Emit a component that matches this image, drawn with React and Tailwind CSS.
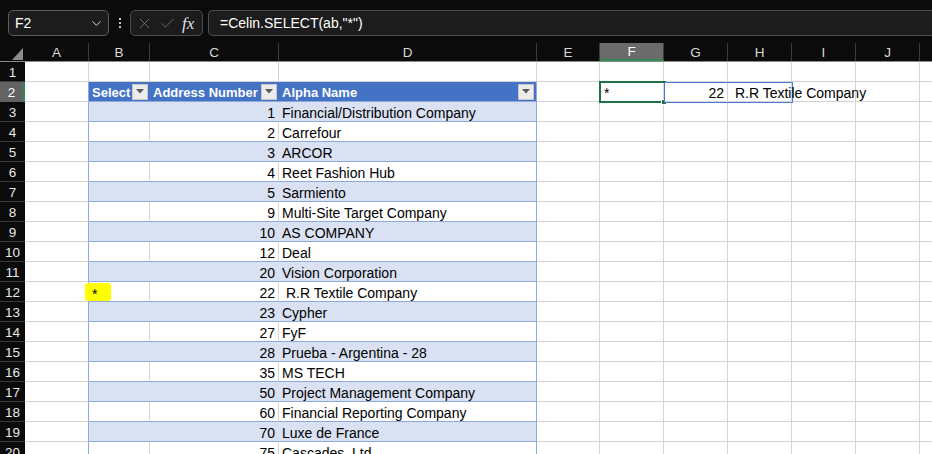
import { ChevronDown, X, Check } from "lucide-react";

/* ---------- sheet data ---------- */
const COLS = [
  { key: "A", w: "w-[64px]" },
  { key: "B", w: "w-[61px]" },
  { key: "C", w: "w-[129px]" },
  { key: "D", w: "w-[258px]" },
  { key: "E", w: "w-[63px]" },
  { key: "F", w: "w-[64px]" },
  { key: "G", w: "w-[64px]" },
  { key: "H", w: "w-[64px]" },
  { key: "I", w: "w-[64px]" },
  { key: "J", w: "w-[64px]" },
  { key: "", w: "w-[64px]" },
];

const ROWS = [
  [1, "Financial/Distribution Company"],
  [2, "Carrefour"],
  [3, "ARCOR"],
  [4, "Reet Fashion Hub"],
  [5, "Sarmiento"],
  [9, "Multi-Site Target Company"],
  [10, "AS COMPANY"],
  [12, "Deal"],
  [20, "Vision Corporation"],
  [22, " R.R Textile Company"],
  [23, "Cypher"],
  [27, "FyF"],
  [28, "Prueba - Argentina - 28"],
  [35, "MS TECH"],
  [50, "Project Management Company"],
  [60, "Financial Reporting Company"],
  [70, "Luxe de France"],
  [75, "Cascades, Ltd"],
];

const cellBase = "shrink-0 h-full border-r border-b border-[#d4d4d4] bg-white";

/* ---------- UI helpers ---------- */
function RowHead({ n, selected }) {
  return (
    <div
      className={`w-[25px] shrink-0 h-full flex items-center justify-center pt-[3px] text-[13.5px] ${
        selected
          ? "bg-[#636363] text-white border-r-2 border-[#2e8b57]"
          : "bg-[#0b0b0b] text-[#e8e8e8] border-b border-[#3a3a3a]"
      }`}
    >
      {n}
    </div>
  );
}

function FilterBtn() {
  return (
    <div className="ml-auto mr-[2px] w-[16px] h-[16px] shrink-0 bg-[#ececec] border border-[#c8c8c8] flex items-center justify-center">
      <svg width="8" height="5" viewBox="0 0 8 5">
        <path d="M0 0 L8 0 L4 4.5 Z" fill="#5a5a5a" />
      </svg>
    </div>
  );
}

function FormulaBar() {
  return (
    <div className="h-[43px] bg-[#0b0b0b] flex items-start pt-[10px] pl-[8px]">
      <div className="w-[101px] h-[26px] rounded-[5px] border border-[#5c5c5c] bg-[#1c1c1c] flex items-center pl-[6px] pr-[4px] text-[14px] text-white">
        <span>F2</span>
        <ChevronDown className="ml-auto" size={15} strokeWidth={1.6} color="#d0d0d0" />
      </div>
      <div className="w-[21px] h-[26px] flex flex-col items-center justify-center gap-[2px]">
        <span className="w-[2px] h-[2px] bg-[#c8c8c8]" />
        <span className="w-[2px] h-[2px] bg-[#c8c8c8]" />
        <span className="w-[2px] h-[2px] bg-[#c8c8c8]" />
      </div>
      <div className="w-[73px] h-[26px] rounded-[5px] border border-[#4c4c4c] bg-[#1c1c1c] flex items-center pl-[5px]">
        <X size={17} strokeWidth={1.3} color="#707070" />
        <Check className="ml-[6px]" size={17} strokeWidth={1.3} color="#707070" />
        <span className="ml-[6px] font-['Liberation_Serif',serif] italic text-[17px] text-[#e0e0e0] leading-none">
          fx
        </span>
      </div>
      <div className="ml-[5px] flex-1 h-[26px] rounded-l-[5px] border border-r-0 border-[#4c4c4c] bg-[#1c1c1c] flex items-center pl-[11px] text-[14px] text-white whitespace-pre">
        =Celin.SELECT(ab,"*")
      </div>
    </div>
  );
}

function ColumnHeader() {
  return (
    <div className="h-[19px] flex bg-[#0b0b0b] border-b border-[#8a8a8a]">
      <div className="w-[25px] shrink-0 h-full relative">
        <svg className="absolute right-[2px] bottom-[1px]" width="11" height="12" viewBox="0 0 11 12">
          <path d="M11 0 L11 12 L0 12 Z" fill="#8c8c8c" />
        </svg>
      </div>
      {COLS.map((c) => (
        <div
          key={c.key + c.w}
          className={`${c.w} shrink-0 h-full flex items-center justify-center pt-[2px] text-[13.5px] border-r border-[#3c3c3c] ${
            c.key === "F" ? "bg-[#6b6b6b] text-white border-b-2 border-b-[#2e8b57]" : "text-[#d8d8d8]"
          }`}
        >
          {c.key}
        </div>
      ))}
    </div>
  );
}

function TableRow({ rowNum, num, name }) {
  const band = rowNum % 2 === 1;
  const bg = band ? "bg-[#d9e1f2]" : "bg-white";
  const inner = band ? "border-r-[#d9e1f2]" : "border-r-[#d4d4d4]";
  const hl = rowNum === 12;
  return (
    <div className="flex h-[20px]">
      <RowHead n={rowNum} />
      <div className={`${cellBase} w-[64px] border-r-[#8ea9db]`} />
      <div className={`shrink-0 h-full w-[61px] border-r border-b border-b-[#8ea9db] ${inner} ${bg} relative`}>
        {hl && (
          <>
            <div className="absolute left-[-4px] top-[1px] w-[26px] h-[18px] bg-[#ffff00] rounded-[3px]" />
            <span className="absolute left-[3px] top-[2px] text-[14px]">*</span>
          </>
        )}
      </div>
      <div className={`shrink-0 h-full w-[129px] border-r border-b border-b-[#8ea9db] ${inner} ${bg} flex items-center justify-end pr-[3px] pt-[3px] text-[14px]`}>
        {num}
      </div>
      <div className={`shrink-0 h-full w-[258px] border-r border-b border-[#8ea9db] ${bg} flex items-center pl-[3px] pt-[3px] text-[14px] whitespace-pre`}>
        {name}
      </div>
      {COLS.slice(4).map((c) => (
        <div key={c.key + c.w} className={`${cellBase} ${c.w}`} />
      ))}
    </div>
  );
}

export default function App() {
  return (
    <div className="w-[932px] h-[454px] overflow-hidden bg-white font-['Liberation_Sans',Arial,sans-serif] text-black">
      <FormulaBar />
      <ColumnHeader />

      {/* row 1 */}
      <div className="flex h-[20px]">
        <RowHead n={1} />
        {COLS.map((c) => (
          <div key={c.key + c.w} className={`${cellBase} ${c.w}`} />
        ))}
      </div>

      {/* row 2: table header + formula result */}
      <div className="flex h-[20px]">
        <RowHead n={2} selected />
        <div className={`${cellBase} w-[64px] border-r-[#8ea9db]`} />
        <div className="shrink-0 h-full w-[61px] bg-[#4472c4] border-b border-[#8ea9db] flex items-center pl-[3px] text-[13px] font-bold text-white">
          <span className="pt-[3px] whitespace-nowrap">Select</span>
          <FilterBtn />
        </div>
        <div className="shrink-0 h-full w-[129px] bg-[#4472c4] border-b border-[#8ea9db] flex items-center pl-[3px] text-[13px] font-bold text-white">
          <span className="pt-[3px] whitespace-nowrap">Address Number</span>
          <FilterBtn />
        </div>
        <div className="shrink-0 h-full w-[258px] bg-[#4472c4] border-r border-b border-[#8ea9db] flex items-center pl-[3px] text-[13px] font-bold text-white">
          <span className="pt-[3px] whitespace-nowrap">Alpha Name</span>
          <FilterBtn />
        </div>
        <div className={`${cellBase} w-[63px]`} />
        <div className={`${cellBase} w-[64px] relative flex items-center pl-[4px] pt-[3px] text-[14px]`}>
          *
          <div className="absolute left-[-1px] top-[-1px] w-[67px] h-[22px] border-2 border-[#1e7145]" />
          <div className="absolute left-[61px] top-[17px] w-[6px] h-[6px] bg-[#1e7145] border border-white" />
        </div>
        <div className={`${cellBase} w-[64px] relative flex items-center justify-end pr-[3px] pt-[3px] text-[14px]`}>
          22
          <div className="absolute left-0 top-0 w-[129px] h-[21px] border border-[#4a7bd6]" />
        </div>
        <div className={`${cellBase} w-[64px] flex items-center pl-[3px] pt-[3px] text-[14px] overflow-visible`}>
          <span className="relative z-10 whitespace-pre"> R.R Textile Company</span>
        </div>
        <div className="shrink-0 h-full w-[64px] border-r border-b border-[#d4d4d4]" />
        <div className={`${cellBase} w-[64px]`} />
        <div className={`${cellBase} w-[64px]`} />
      </div>

      {ROWS.map(([num, name], i) => (
        <TableRow key={num} rowNum={i + 3} num={num} name={name} />
      ))}
    </div>
  );
}
